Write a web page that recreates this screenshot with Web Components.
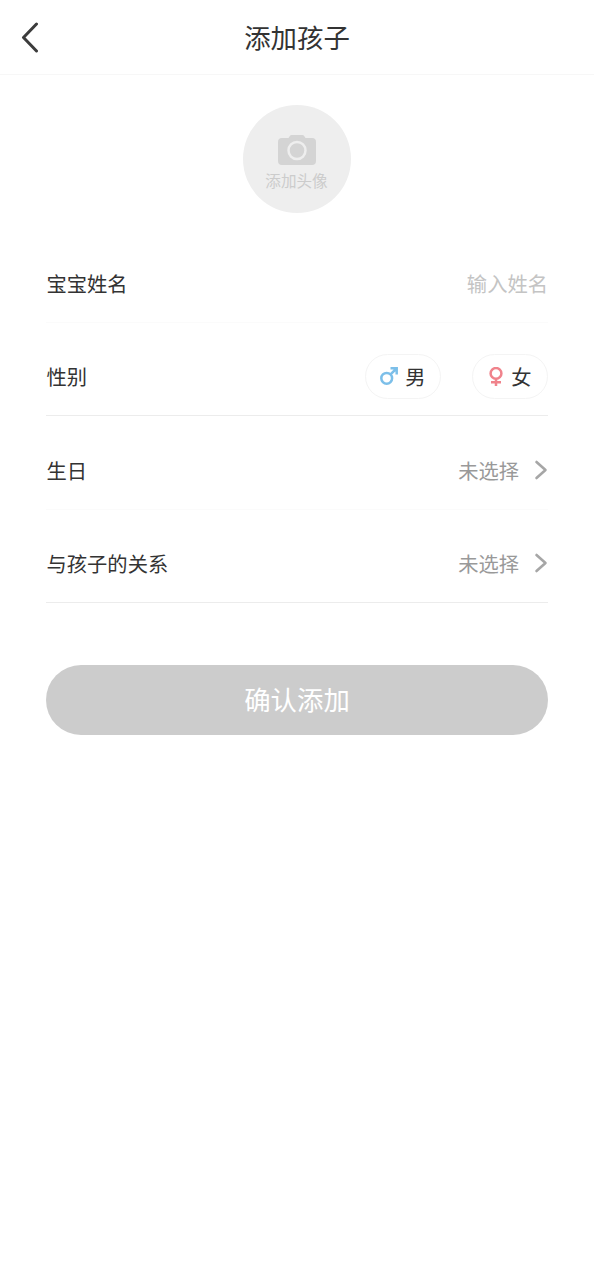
<!DOCTYPE html>
<html lang="zh"><head><meta charset="utf-8">
<style>
html,body{margin:0;background:#fff;font-family:"Noto Sans CJK SC","Noto Sans",sans-serif;}
main{display:block;width:594px;}
.form{display:block;padding:16px 46px 0 46px;}
</style></head><body>
<main>
<app-header>添加孩子</app-header>
<avatar-picker>添加头像</avatar-picker>
<div class="form">
<form-row label="宝宝姓名" line="faint"><span style="color:#c4c4c4">输入姓名</span></form-row>
<form-row label="性别" line="solid"><gender-chip kind="m">男</gender-chip><gender-chip kind="f" style="margin-left:31px">女</gender-chip></form-row>
<form-row label="生日" line="faint"><span style="color:#999">未选择</span><chev-icon></chev-icon></form-row>
<form-row label="与孩子的关系" line="solid"><span style="color:#999">未选择</span><chev-icon></chev-icon></form-row>
<submit-button>确认添加</submit-button>
</div>
</main>
<script>
function def(name,html){customElements.define(name,class extends HTMLElement{connectedCallback(){if(this.shadowRoot)return;const r=this.attachShadow({mode:'open'});r.innerHTML=typeof html==='function'?html(this):html;}});}
def('app-header',`<style>:host{display:flex;height:75px;box-sizing:border-box;padding-bottom:2px;align-items:center;justify-content:center;position:relative;border-bottom:1px solid #f7f7f7;font-size:26.4px;color:#333;}
svg{position:absolute;left:21px;top:22px}</style>
<svg width="18" height="31" viewBox="0 0 18 31" fill="none" stroke="#3c3c3c" stroke-width="3" stroke-linecap="round" stroke-linejoin="round"><path d="M15.500 2 L2.500 15.500 L15.500 29"/></svg><slot></slot>`);
def('avatar-picker',`<style>:host{display:flex;justify-content:center;padding-top:30px;}
.c{width:108px;height:108px;border-radius:50%;background:#eee;display:flex;flex-direction:column;align-items:center;color:#ccc;font-size:15.600px;line-height:20px;}
svg{margin-top:30px;margin-bottom:5px;display:block}
span{display:block;margin-left:-1px}</style>
<div class="c"><svg width="38" height="30" viewBox="0 0 38 30"><path fill="#d4d4d4" d="M4 3H10.500L12 .8Q12.500 0 13.500 0H24.500Q25.500 0 26 .8L27.500 3H34Q38 3 38 7V26Q38 30 34 30H4Q0 30 0 26V7Q0 3 4 3Z"/><circle cx="19" cy="15.500" r="8.500" fill="none" stroke="#eee" stroke-width="2.500"/></svg><span><slot></slot></span></div>`);
def('form-row',el=>`<style>:host{display:flex;align-items:center;justify-content:space-between;height:93.5px;box-sizing:border-box;padding:15px 0 0 .5px;font-size:20.3px;color:#333;border-bottom:1px solid ${el.getAttribute('line')==='solid'?'#ececec':'#fbfbfb'};}
.v{display:flex;align-items:center}</style><span>${el.getAttribute('label')}</span><div class="v"><slot></slot></div>`);
def('gender-chip',el=>`<style>:host{display:flex;align-items:center;justify-content:center;gap:7px;width:76px;height:45px;box-sizing:border-box;border:1px solid #f4f4f4;border-radius:23px;font-size:20.3px;color:#333;}svg{display:block}</style>`+(el.getAttribute('kind')==='m'
?`<svg width="18" height="18" viewBox="0 0 18 18" fill="none" stroke="#7cbfe9" stroke-width="2.500"><circle cx="6.700" cy="11.300" r="5.400"/><path d="M10.800 7.200L16.500 1.500M10.500 1.300H16.700V7.500"/></svg>`
:`<svg width="16" height="19" viewBox="0 0 16 19" fill="none" stroke="#f0838c" stroke-width="2.500"><circle cx="8" cy="6.400" r="5.400"/><path d="M8 11.500V19M3 15.300H13"/></svg>`)+`<slot></slot>`);
def('chev-icon',`<style>:host{display:block;margin-left:15px;height:20px}svg{display:block}</style><svg width="14" height="20" viewBox="0 0 14 20" fill="none" stroke="#a6a6a6" stroke-width="2.600" stroke-linecap="round" stroke-linejoin="round"><path d="M2.500 2L11.500 10L2.500 18"/></svg>`);
def('submit-button',`<style>:host{display:flex;align-items:center;justify-content:center;height:70px;box-sizing:border-box;padding-bottom:4px;margin-top:62px;border-radius:35px;background:#ccc;color:#fff;font-size:26.4px;}</style><slot></slot>`);
</script>
</body></html>
